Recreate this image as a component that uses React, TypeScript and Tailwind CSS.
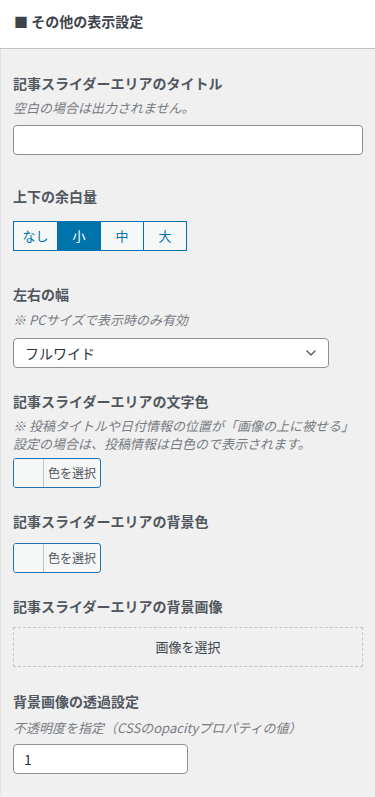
import React from "react";
import { ChevronDown } from "lucide-react";

const font = {
  fontFamily: '"Noto Sans CJK JP", "Noto Sans", "Liberation Sans", sans-serif',
};

function Label({ children, className = "" }: { children: React.ReactNode; className?: string }) {
  return (
    <div className={`text-[14px] leading-[20px] font-bold text-[#50575e] ${className}`}>{children}</div>
  );
}

function Desc({ children, className = "" }: { children: React.ReactNode; className?: string }) {
  return <div className={`text-[13px] leading-[17px] italic text-[#787c82] ${className}`}>{children}</div>;
}

function ColorButton() {
  return (
    <div className="flex w-[88px] h-[30px] rounded-[3px] border border-[#2271b1] bg-[#f6f7f7] overflow-hidden">
      <div className="w-[30px] border-r border-[#c3c4c7] bg-[#f6f7f7]" />
      <div className="flex-1 flex items-center justify-center text-[12px] text-[#50575e]">色を選択</div>
    </div>
  );
}

export default function App() {
  const sizes = ["なし", "小", "中", "大"];
  return (
    <div style={font} className="w-[375px] min-h-[797px] bg-[#f0f0f1]">
      {/* Section header */}
      <div className="h-[49px] bg-white border-b border-[#c3c4c7] flex items-center pl-[14px] pb-[5px]">
        <span className="text-[14px] font-bold text-[#3c434a]">■ その他の表示設定</span>
      </div>

      <div className="pl-[12px] pr-[12px] pt-[24px] pb-[20px] border-l border-[#e0e0e0]">
        {/* Title */}
        <Label>記事スライダーエリアのタイトル</Label>
        <Desc className="mt-[6px]">空白の場合は出力されません。</Desc>
        <div className="mt-[9px] h-[30px] rounded-[4px] border border-[#8c8f94] bg-white" />

        {/* Padding */}
        <Label className="mt-[31px]">上下の余白量</Label>
        <div className="mt-[15px] inline-flex border border-[#0073aa]">
          {sizes.map((s, i) => (
            <div
              key={s}
              className={`w-[43px] h-[28px] flex items-center justify-center text-[13px] ${
                i > 0 ? "border-l border-[#0073aa]" : ""
              } ${i === 1 ? "bg-[#0073aa] text-white" : "bg-[#f6f7f7] text-[#0073aa]"}`}
            >
              {s}
            </div>
          ))}
        </div>

        {/* Width */}
        <Label className="mt-[33px]">左右の幅</Label>
        <Desc className="mt-[7px]">※ PCサイズで表示時のみ有効</Desc>
        <div className="mt-[10px] w-[316px] h-[30px] rounded-[4px] border border-[#8c8f94] bg-white flex items-center justify-between pl-[11px] pr-[9px]">
          <span className="text-[14px] text-[#2c3338]">フルワイド</span>
          <ChevronDown size={16} strokeWidth={2} className="text-[#50575e]" />
        </div>

        {/* Text color */}
        <Label className="mt-[23px]">記事スライダーエリアの文字色</Label>
        <div className="mt-[6px] text-[13px] leading-[18px] italic text-[#787c82]">
          <div>※ 投稿タイトルや日付情報の位置が「画像の上に被せる」</div>
          <div>設定の場合は、投稿情報は白色ので表示されます。</div>
        </div>
        <div className="mt-[5px]">
          <ColorButton />
        </div>

        {/* Background color */}
        <Label className="mt-[23px]">記事スライダーエリアの背景色</Label>
        <div className="mt-[12px]">
          <ColorButton />
        </div>

        {/* Background image */}
        <Label className="mt-[23px]">記事スライダーエリアの背景画像</Label>
        <div className="mt-[11px] h-[40px] border border-dashed border-[#c3c4c7] flex items-center justify-center text-[13px] text-[#3c434a]">
          画像を選択
        </div>

        {/* Opacity */}
        <Label className="mt-[24px]">背景画像の透過設定</Label>
        <Desc className="mt-[8px]">不透明度を指定（CSSのopacityプロパティの値）</Desc>
        <div className="mt-[8px] w-[175px] h-[30px] rounded-[4px] border border-[#8c8f94] bg-white flex items-center pl-[10px] text-[14px] text-[#2c3338]">
          1
        </div>
      </div>
    </div>
  );
}
